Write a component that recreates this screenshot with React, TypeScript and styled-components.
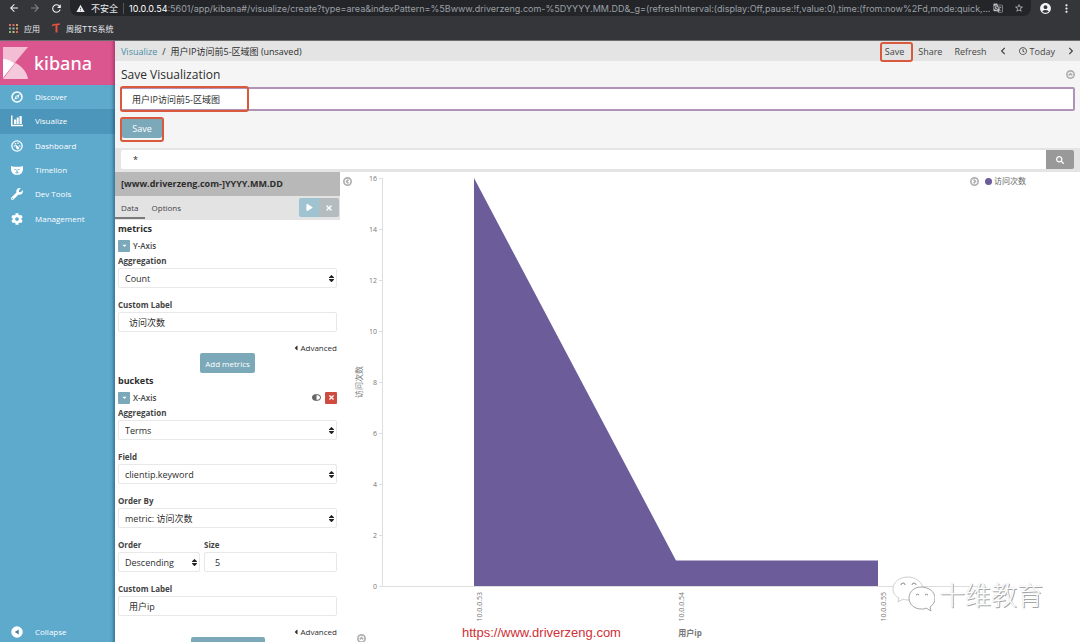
import React from "react";
import styled, { createGlobalStyle } from "styled-components";
import { FaWrench, FaCog, FaSearch, FaPlay, FaTimes, FaRegClock, FaChevronLeft, FaChevronRight, FaCaretDown, FaCaretLeft, FaSort } from "react-icons/fa";
import { MdArrowBack, MdArrowForward, MdRefresh, MdWarning, MdGTranslate, MdStarBorder, MdAccountCircle, MdMoreVert } from "react-icons/md";

const sans = `"Open Sans", "Noto Sans CJK SC", sans-serif`;

const GlobalStyle = createGlobalStyle`
  *, *::after { box-sizing: border-box; }
  body { margin: 0; font-family: ${sans}; font-size: 9px; color: #2d2d2d; background: #fff; }
  button, input, select { font: inherit; color: inherit; margin: 0; }
  button { border: 0; padding: 0; background: none; cursor: pointer; }
  a { color: inherit; text-decoration: none; }
  svg { flex: none; }
`;

const Screen = styled.div`
  display: flex;
  flex-direction: column;
  height: 100vh;
  overflow: hidden;
`;

/* Browser chrome */
const Chrome = styled.header`
  flex: none;
  height: 41px;
  background: #35363a;
  border-bottom: 1px solid #6b6c6e;
  color: #e8eaed;
  font-family: Inter, "Noto Sans CJK SC", sans-serif;
`;
const ChromeRow = styled.div`
  display: flex;
  align-items: center;
  height: 16px;
  padding: 0 7px;
  gap: 7px;
`;
const ChromeButton = styled.button<{ $dim?: boolean }>`
  display: flex;
  width: 14px;
  justify-content: center;
  color: ${(p) => (p.$dim ? "#85868a" : "#f1f3f4")};
`;
const AddressBar = styled.div`
  flex: 1;
  min-width: 0;
  display: flex;
  align-items: center;
  height: 16px;
  padding: 0 7px 0 6px;
  border-radius: 0 0 8px 8px;
  background: #242529;
`;
const Insecure = styled.span`
  display: flex;
  align-items: center;
  gap: 6px;
  padding-right: 5px;
  margin-right: 5px;
  border-right: 1px solid #55565a;
  line-height: 11px;
`;
const UrlHost = styled.label`
  color: #fff;
`;
const UrlInput = styled.input`
  flex: 1;
  min-width: 0;
  padding: 0;
  border: 0;
  outline: 0;
  background: none;
  color: #9aa0a6;
`;
const AddressIcons = styled.span`
  display: flex;
  gap: 11px;
  color: #b8babd;
`;
const Bookmarks = styled.nav`
  display: flex;
  align-items: center;
  gap: 12px;
  height: 24px;
  padding-left: 9px;
  font-size: 8px;
`;
const Bookmark = styled.a`
  display: flex;
  align-items: center;
  gap: 6px;
`;

/* Kibana shell */
const Shell = styled.div`
  flex: 1;
  min-height: 0;
  display: flex;
`;
const Sidebar = styled.aside`
  position: relative;
  flex: none;
  width: 115px;
  display: flex;
  flex-direction: column;
  background: #5eaacd;
  color: #fff;
  box-shadow: inset -4px 0 3px -2px rgba(20, 70, 100, 0.5);
`;
const Brand = styled.a`
  display: flex;
  align-items: center;
  gap: 6px;
  height: 44px;
  padding-left: 3px;
  background: #db568f;
  box-shadow: inset -4px 0 3px -2px rgba(110, 20, 70, 0.4);
  font-family: "Noto Sans", sans-serif;
  font-size: 18px;
  font-weight: 500;
`;
const NavList = styled.nav`
  display: grid;
  grid-auto-rows: 1fr;
  height: 146px;
`;
const NavItem = styled.a<{ $active?: boolean }>`
  display: flex;
  align-items: center;
  gap: 12px;
  padding-left: 11px;
  font-size: 8px;
  line-height: 10px;
  background: ${(p) => (p.$active ? "rgba(0, 70, 110, 0.2)" : "none")};
`;
const SidebarFoot = styled.div`
  margin-top: auto;
  display: grid;
  height: 20px;
`;

const Main = styled.main`
  flex: 1;
  min-width: 0;
  display: flex;
  flex-direction: column;
`;
const TopNav = styled.div`
  flex: none;
  display: flex;
  align-items: center;
  justify-content: space-between;
  height: 20px;
  padding: 0 5px 0 6px;
  background: #e4e4e4;
`;
const Crumbs = styled.div`
  display: flex;
  gap: 5px;
  a { color: #4a8ea6; }
`;
const Actions = styled.div`
  display: flex;
  align-items: center;
  gap: 12px;
  color: #444;
`;
const Action = styled.button`
  display: flex;
  align-items: center;
  gap: 3px;
`;
const Marked = styled.span<{ $inset: string }>`
  position: relative;
  display: flex;
  &::after {
    content: "";
    position: absolute;
    inset: ${(p) => p.$inset};
    border: 2px solid #d9593d;
    border-radius: 3px;
    pointer-events: none;
  }
`;
const SaveAction = styled(Marked)`
  margin-right: 2px;
`;

const SavePanel = styled.form`
  flex: none;
  display: flex;
  flex-direction: column;
  align-items: flex-start;
  height: 87px;
  padding: 6px 5px 0;
  background: #f5f5f5;
`;
const PanelHead = styled.div`
  align-self: stretch;
  display: flex;
  align-items: flex-start;
  justify-content: space-between;
  padding-left: 1px;
  height: 20px;
  font-size: 12px;
  line-height: 16px;
  color: #2d2d2d;
`;
const TitleField = styled.div`
  position: relative;
  align-self: stretch;
  display: flex;
  &::after {
    content: "";
    position: absolute;
    inset: -1px auto -1px 0;
    width: 129px;
    border: 2px solid #d9593d;
    border-radius: 3px;
    pointer-events: none;
  }
`;
const TitleInput = styled.input`
  flex: 1;
  height: 24px;
  padding: 0 10px;
  border: 2px solid #b192b8;
  border-radius: 2px;
  background: #fff;
  outline: 0;
`;
const SaveRow = styled.div`
  padding: 7px 2px 0;
`;
const PrimaryButton = styled.button<{ $w: number; $h: number }>`
  width: ${(p) => p.$w}px;
  height: ${(p) => p.$h}px;
  flex: none;
  border-radius: 2px;
  background: #7ba9b9;
  color: #fff;
`;

const QueryBar = styled.form`
  flex: none;
  display: flex;
  height: 24px;
  padding: 2px 6px 3px;
  background: #e4e4e4;
`;
const QueryInput = styled.input`
  flex: 1;
  min-width: 0;
  padding: 0 12px;
  border: 0;
  border-radius: 2px 0 0 2px;
  background: #fff;
  outline: 0;
`;
const QueryButton = styled.button`
  display: grid;
  place-items: center;
  width: 28px;
  border-radius: 0 2px 2px 0;
  background: #999;
  color: #fff;
`;

const Work = styled.div`
  flex: 1;
  min-height: 0;
  display: flex;
`;
const Editor = styled.section`
  flex: none;
  width: 225px;
  overflow: hidden;
`;
const IndexTitle = styled.h1`
  margin: 0;
  padding-left: 6px;
  font-size: 9px;
  line-height: 24px;
  background: #b8b8b8;
`;
const Tabs = styled.div`
  display: flex;
  height: 24px;
  padding: 1px 1px 1px 0;
  background: #e3e3e4;
`;
const Tab = styled.button<{ $active?: boolean }>`
  padding: 0 6px;
  margin-right: 1px;
  font-size: 8px;
  color: #444;
  border-bottom: 2px solid ${(p) => (p.$active ? "#7a7a7a" : "transparent")};
`;
const ApplyGroup = styled.div`
  margin: 1px 0 0 auto;
  display: flex;
  height: 19px;
  border-radius: 2px;
  overflow: hidden;
`;
const ApplyButton = styled.button<{ $bg: string }>`
  display: grid;
  place-items: center;
  width: 20px;
  background: ${(p) => p.$bg};
  color: #fff;
`;
const Form = styled.form`
  display: flex;
  flex-direction: column;
  padding: 1px 3px 0;
`;
const GroupTitle = styled.h2`
  margin: 0;
  font-size: 9px;
  line-height: 16px;
`;
const AggHead = styled.div`
  display: flex;
  align-items: center;
  gap: 3px;
  height: 17px;
  font-size: 8px;
  font-weight: 600;
  color: #444;
`;
const Square = styled.button<{ $bg: string }>`
  display: grid;
  place-items: center;
  width: 12px;
  height: 12px;
  border-radius: 1px;
  background: ${(p) => p.$bg};
  color: #fff;
`;
const AggTools = styled.span`
  display: flex;
  align-items: center;
  gap: 4px;
  margin-left: auto;
`;
const Field = styled.div`
  display: flex;
  flex-direction: column;
  flex: 1 1 auto;
  min-width: 0;
  padding-bottom: 10px;
`;
const Label = styled.label`
  font-size: 8px;
  line-height: 14px;
  font-weight: 700;
  color: #444;
`;
const SelectBox = styled.div`
  position: relative;
  display: flex;
  svg { position: absolute; right: 1px; top: 6px; pointer-events: none; }
`;
const Select = styled.select`
  appearance: none;
  width: 100%;
  height: 20px;
  padding: 0 6px;
  border: 1px solid #e8e8e8;
  border-radius: 2px;
  background: #fff;
`;
const Input = styled.input`
  width: 100%;
  height: 20px;
  padding: 0 10px;
  border: 1px solid #e8e8e8;
  border-radius: 2px;
`;
const Pair = styled.div`
  display: grid;
  grid-template-columns: 82px 1fr;
  gap: 4px;
`;
const Advanced = styled.button`
  align-self: flex-end;
  display: flex;
  align-items: center;
  font-size: 8px;
  line-height: 11px;
`;
const Center = styled.div`
  display: flex;
  justify-content: center;
  font-size: 8px;
`;

const Visualization = styled.section`
  position: relative;
  flex: 1;
  min-width: 0;
  display: flex;
  align-items: flex-start;
`;
const ChartSvg = styled.svg`
  flex: 1;
  min-width: 0;
  font-family: ${sans};
  font-size: 7px;
  fill: #777;
`;
const CollapseEditor = styled.button`
  position: absolute;
  left: 3px;
  top: 5px;
  display: flex;
`;
const Legend = styled.div`
  position: absolute;
  right: 54px;
  top: 3px;
  display: flex;
  align-items: center;
  gap: 6px;
  font-size: 8px;
  line-height: 12px;
  color: #666;
`;
const LegendItem = styled.span`
  display: flex;
  align-items: center;
  gap: 2px;
`;
const Dot = styled.i`
  width: 7px;
  height: 7px;
  border-radius: 50%;
  background: #6b5c9b;
`;
const SpyToggle = styled.button`
  position: absolute;
  left: 17px;
  bottom: -1px;
  display: flex;
`;
const SiteLink = styled.a`
  position: absolute;
  left: 122px;
  bottom: 1px;
  font: 13px/16px "Liberation Sans", Arial, sans-serif;
  color: #cf2f35;
`;
const Watermark = styled.div`
  position: absolute;
  right: 37px;
  bottom: 28px;
  display: flex;
  align-items: center;
  gap: 4px;
  font: 300 26px/40px "Noto Sans CJK SC", sans-serif;
  color: #fff;
  text-shadow: 1px 1px 0 #a4a4a4, 0 0 1px #ccc;
`;

const CircleArrow = ({ turn }: { turn: number }) => (
  <svg width="9" height="9" viewBox="0 0 16 16" fill="none" stroke="#b0b0b0" strokeWidth="3">
    <circle cx="8" cy="8" r="6.5" />
    <path d="M4.8 9.6 8 6.4l3.2 3.2" transform={`rotate(${turn} 8 8)`} />
  </svg>
);

const DiscoverIcon = () => (
  <svg width="12" height="12" viewBox="0 0 24 24">
    <circle cx="12" cy="12" r="10" fill="none" stroke="#fff" strokeWidth="3" />
    <path d="M17.5 6.5 14.5 14 6.5 17.5 9.5 10Z M12 10.3a1.7 1.7 0 1 0 0 3.4 1.7 1.7 0 0 0 0-3.4Z" fill="#fff" fillRule="evenodd" />
  </svg>
);
const VisualizeIcon = () => (
  <svg width="12" height="12" viewBox="0 0 24 24" fill="#fff">
    <path d="M0 1h3v18.5H24v3H0ZM6 9h4.500v9H6ZM11.500 5h4v13h-4ZM17 2H21.500V18H17Z" />
  </svg>
);
const DashboardIcon = () => (
  <svg width="12" height="12" viewBox="0 0 24 24" fill="#fff">
    <circle cx="12" cy="12" r="10.300" fill="none" stroke="#fff" strokeWidth="2.600" />
    <circle cx="7" cy="12" r="1.600" />
    <circle cx="9" cy="7.500" r="1.600" />
    <circle cx="14" cy="6.500" r="1.600" />
    <circle cx="17.500" cy="12" r="1.600" />
    <path d="M8 8.500 14.500 13a3 3 0 1 1-4 2.500Z" />
  </svg>
);
const TimelionIcon = () => (
  <svg width="12" height="12" viewBox="0 0 24 24">
    <path d="M0 4 5 5.500h14L24 4v8l-2.500 6-5 3.500h-9l-5-3.500L0 12Z" fill="#fff" />
    <path d="M7 11h2.500M14.500 11H17M12 11v6M9 17.500h6" stroke="#5eaacd" strokeWidth="2" fill="none" />
  </svg>
);
const CollapseIcon = () => (
  <svg width="12" height="12" viewBox="0 0 24 24">
    <circle cx="12" cy="12" r="11.500" fill="#fff" />
    <path d="M15.500 7v10L7.500 12Z" fill="#4d7f95" />
  </svg>
);
const KibanaMark = () => (
  <svg width="25" height="32" viewBox="0 0 25 32">
    <path d="M0 0h25L0 30Z" fill="#f3bdd3" />
    <path d="M12.500 16C20 20 24 26 25 32H0Z" fill="#f5c9dc" />
    <path d="M0 31V12c4 0 8 2 11.500 4.500Z" fill="#fff" />
  </svg>
);
const appColors = ["#d9705f", "#d9705f", "#c9a06a", "#7fae8a", "#a9aeb5", "#d9a15f", "#8fb37f", "#d7b96a", "#d9705f"];
const AppsIcon = () => (
  <svg width="9" height="9" viewBox="0 0 9 9">
    {appColors.map((c, i) => (
      <rect key={i} x={(i % 3) * 3.5} y={Math.floor(i / 3) * 3.5} width="2" height="2" fill={c} />
    ))}
  </svg>
);
const TtsIcon = () => (
  <svg width="8" height="10" viewBox="0 0 8 10" fill="none" stroke="#e0533f">
    <path d="M0 3C1.500 .8 4 2 8 1" strokeWidth="1.600" />
    <path d="M4.500 2v7.500" strokeWidth="2" />
  </svg>
);
const ToggleIcon = () => (
  <svg width="9" height="7" viewBox="0 0 18 14">
    <rect x="1" y="1.500" width="16" height="11" rx="5.500" fill="#fff" stroke="#555" strokeWidth="2" />
    <path d="M9 1.500H6.500a5.500 5.500 0 0 0 0 11H9Z" fill="#666" />
  </svg>
);
const WechatIcon = () => (
  <svg width="43" height="38" viewBox="0 0 43 38" fill="#fff" stroke="#a5a5a5" strokeWidth="1">
    <path d="M16 2C8 2 1 7 1 14c0 4 2 7 6 9l-1 4 5-3c2 1 4 1 7 1 7 0 13-5 13-11S24 2 16 2Z" stroke="#cfcfcf" />
    <path d="M29 12c-7 0-12 5-12 11s5 11 12 11c2 0 4 0 5-1l5 3-1-4c3-2 5-5 5-9 0-6-6-11-14-11Z" />
    <path d="M9 10a2 2 0 0 1 4 0M20 10a2 2 0 0 1 4 0M24 20a2 2 0 0 1 3 0M33 20a2 2 0 0 1 3 0" fill="none" stroke="#888" />
  </svg>
);

const nav = [
  { name: "Discover", icon: <DiscoverIcon /> },
  { name: "Visualize", icon: <VisualizeIcon />, active: true },
  { name: "Dashboard", icon: <DashboardIcon /> },
  { name: "Timelion", icon: <TimelionIcon /> },
  { name: "Dev Tools", icon: <FaWrench size={12} /> },
  { name: "Management", icon: <FaCog size={12} /> },
];

const SelectField = ({ id, label, value }: { id: string; label: string; value: string }) => (
  <Field>
    <Label htmlFor={id}>{label}</Label>
    <SelectBox>
      <Select id={id} defaultValue={value}>
        <option>{value}</option>
      </Select>
      <FaSort size={9} color="#222" />
    </SelectBox>
  </Field>
);
const TextField = ({ id, label, value }: { id: string; label: string; value: string }) => (
  <Field>
    <Label htmlFor={id}>{label}</Label>
    <Input id={id} defaultValue={value} />
  </Field>
);
const AdvancedToggle = () => (
  <Advanced type="button">
    <FaCaretLeft size={8} />
    Advanced
  </Advanced>
);

const ticks = [0, 2, 4, 6, 8, 10, 12, 14, 16];
const data = [
  { ip: "10.0.0.53", count: 16 },
  { ip: "10.0.0.54", count: 1 },
  { ip: "10.0.0.55", count: 1 },
];
const chart = { left: 42, base: 414, unit: 25.5, first: 134, step: 202, right: 640 };
const yOf = (v: number) => chart.base - v * chart.unit;
const xOf = (i: number) => chart.first + i * chart.step;

const AreaChart = () => (
  <ChartSvg viewBox="0 0 740 470" preserveAspectRatio="xMinYMin meet" role="img" aria-label="访问次数">
    <path d={`M${chart.left}.5 ${yOf(16)}V${chart.base}.5H${chart.right}`} fill="none" stroke="#ddd" />
    {ticks.map((t) => (
      <g key={t}>
        <path d={`M${chart.left - 3} ${Math.round(yOf(t)) + 0.5}h3`} stroke="#ddd" />
        <text x={chart.left - 5} y={yOf(t) + 3} textAnchor="end">{t}</text>
      </g>
    ))}
    <polygon
      fill="#6c5d9a"
      points={[`${xOf(0)},${chart.base}`, ...data.map((d, i) => `${xOf(i)},${yOf(d.count)}`), `${xOf(2)},${chart.base}`].join(" ")}
    />
    {data.map((d, i) => (
      <text key={d.ip} transform={`translate(${xOf(i) + 8} ${chart.base + 6}) rotate(-90)`} textAnchor="end">{d.ip}</text>
    ))}
    <text transform="translate(22 210) rotate(-90)" textAnchor="middle" fontSize="8">访问次数</text>
    <text x="350" y="464" textAnchor="middle" fontSize="8" fontWeight="700">用户ip</text>
  </ChartSvg>
);

export default function App() {
  return (
    <Screen>
      <GlobalStyle />
      <Chrome>
        <ChromeRow>
          <ChromeButton aria-label="Back"><MdArrowBack size={12} /></ChromeButton>
          <ChromeButton aria-label="Forward" $dim><MdArrowForward size={12} /></ChromeButton>
          <ChromeButton aria-label="Reload"><MdRefresh size={13} /></ChromeButton>
          <AddressBar>
            <Insecure><MdWarning size={9} />不安全</Insecure>
            <UrlHost htmlFor="url">10.0.0.54</UrlHost>
            <UrlInput id="url" defaultValue=":5601/app/kibana#/visualize/create?type=area&indexPattern=%5Bwww.driverzeng.com-%5DYYYY.MM.DD&_g=(refreshInterval:(display:Off,pause:!f,value:0),time:(from:now%2Fd,mode:quick,..." />
            <AddressIcons><MdGTranslate size={10} /><MdStarBorder size={10} /></AddressIcons>
          </AddressBar>
          <ChromeButton aria-label="Account"><MdAccountCircle size={13} /></ChromeButton>
          <ChromeButton aria-label="Menu"><MdMoreVert size={13} /></ChromeButton>
        </ChromeRow>
        <Bookmarks>
          <Bookmark href="#apps"><AppsIcon />应用</Bookmark>
          <Bookmark href="#tts"><TtsIcon />周报TTS系统</Bookmark>
        </Bookmarks>
      </Chrome>
      <Shell>
        <Sidebar>
          <Brand href="#home"><KibanaMark />kibana</Brand>
          <NavList>
            {nav.map((n) => (
              <NavItem key={n.name} href={`#${n.name}`} $active={n.active}>{n.icon}{n.name}</NavItem>
            ))}
          </NavList>
          <SidebarFoot>
            <NavItem href="#collapse"><CollapseIcon />Collapse</NavItem>
          </SidebarFoot>
        </Sidebar>
        <Main>
          <TopNav>
            <Crumbs>
              <a href="#visualize">Visualize</a>
              <span>/</span>
              <span>用户IP访问前5-区域图 (unsaved)</span>
            </Crumbs>
            <Actions>
              <SaveAction $inset="-3px -9px -4px -5px"><Action>Save</Action></SaveAction>
              <Action>Share</Action>
              <Action>Refresh</Action>
              <Action aria-label="Earlier"><FaChevronLeft size={8} /></Action>
              <Action><FaRegClock size={8} />Today</Action>
              <Action aria-label="Later"><FaChevronRight size={8} /></Action>
            </Actions>
          </TopNav>
          <SavePanel>
            <PanelHead>
              <label htmlFor="title">Save Visualization</label>
              <button type="button" aria-label="Close"><CircleArrow turn={0} /></button>
            </PanelHead>
            <TitleField>
              <TitleInput id="title" defaultValue="用户IP访问前5-区域图" />
            </TitleField>
            <SaveRow>
              <Marked $inset="-1px -2px -4px"><PrimaryButton type="button" $w={40} $h={20}>Save</PrimaryButton></Marked>
            </SaveRow>
          </SavePanel>
          <QueryBar>
            <QueryInput aria-label="Query" defaultValue="*" />
            <QueryButton type="button" aria-label="Search"><FaSearch size={8} /></QueryButton>
          </QueryBar>
          <Work>
            <Editor>
              <IndexTitle>[www.driverzeng.com-]YYYY.MM.DD</IndexTitle>
              <Tabs>
                <Tab $active>Data</Tab>
                <Tab>Options</Tab>
                <ApplyGroup>
                  <ApplyButton $bg="#9fc3d0" aria-label="Apply"><FaPlay size={7} /></ApplyButton>
                  <ApplyButton $bg="#b5bcbf" aria-label="Discard"><FaTimes size={8} /></ApplyButton>
                </ApplyGroup>
              </Tabs>
              <Form>
                <GroupTitle>metrics</GroupTitle>
                <AggHead>
                  <Square type="button" $bg="#7ba9b9" aria-label="Toggle Y-Axis"><FaCaretDown size={7} /></Square>
                  Y-Axis
                </AggHead>
                <SelectField id="yagg" label="Aggregation" value="Count" />
                <TextField id="ylabel" label="Custom Label" value="访问次数" />
                <AdvancedToggle />
                <Center><PrimaryButton type="button" $w={55} $h={20}>Add metrics</PrimaryButton></Center>
                <GroupTitle>buckets</GroupTitle>
                <AggHead>
                  <Square type="button" $bg="#7ba9b9" aria-label="Toggle X-Axis"><FaCaretDown size={7} /></Square>
                  X-Axis
                  <AggTools>
                    <button type="button" aria-label="Disable"><ToggleIcon /></button>
                    <Square type="button" $bg="#cf4b40" aria-label="Remove"><FaTimes size={7} /></Square>
                  </AggTools>
                </AggHead>
                <SelectField id="xagg" label="Aggregation" value="Terms" />
                <SelectField id="field" label="Field" value="clientip.keyword" />
                <SelectField id="orderby" label="Order By" value="metric: 访问次数" />
                <Pair>
                  <SelectField id="order" label="Order" value="Descending" />
                  <TextField id="size" label="Size" value="5" />
                </Pair>
                <TextField id="xlabel" label="Custom Label" value="用户ip" />
                <AdvancedToggle />
                <Center><PrimaryButton type="button" $w={74} $h={20} aria-label="Add sub-buckets" /></Center>
              </Form>
            </Editor>
            <Visualization>
              <AreaChart />
              <CollapseEditor aria-label="Hide editor"><CircleArrow turn={-90} /></CollapseEditor>
              <Legend>
                <CircleArrow turn={90} />
                <LegendItem><Dot />访问次数</LegendItem>
              </Legend>
              <SpyToggle aria-label="Show details"><CircleArrow turn={0} /></SpyToggle>
              <SiteLink href="#site">https://www.driverzeng.com</SiteLink>
              <Watermark><WechatIcon />十维教育</Watermark>
            </Visualization>
          </Work>
        </Main>
      </Shell>
    </Screen>
  );
}
